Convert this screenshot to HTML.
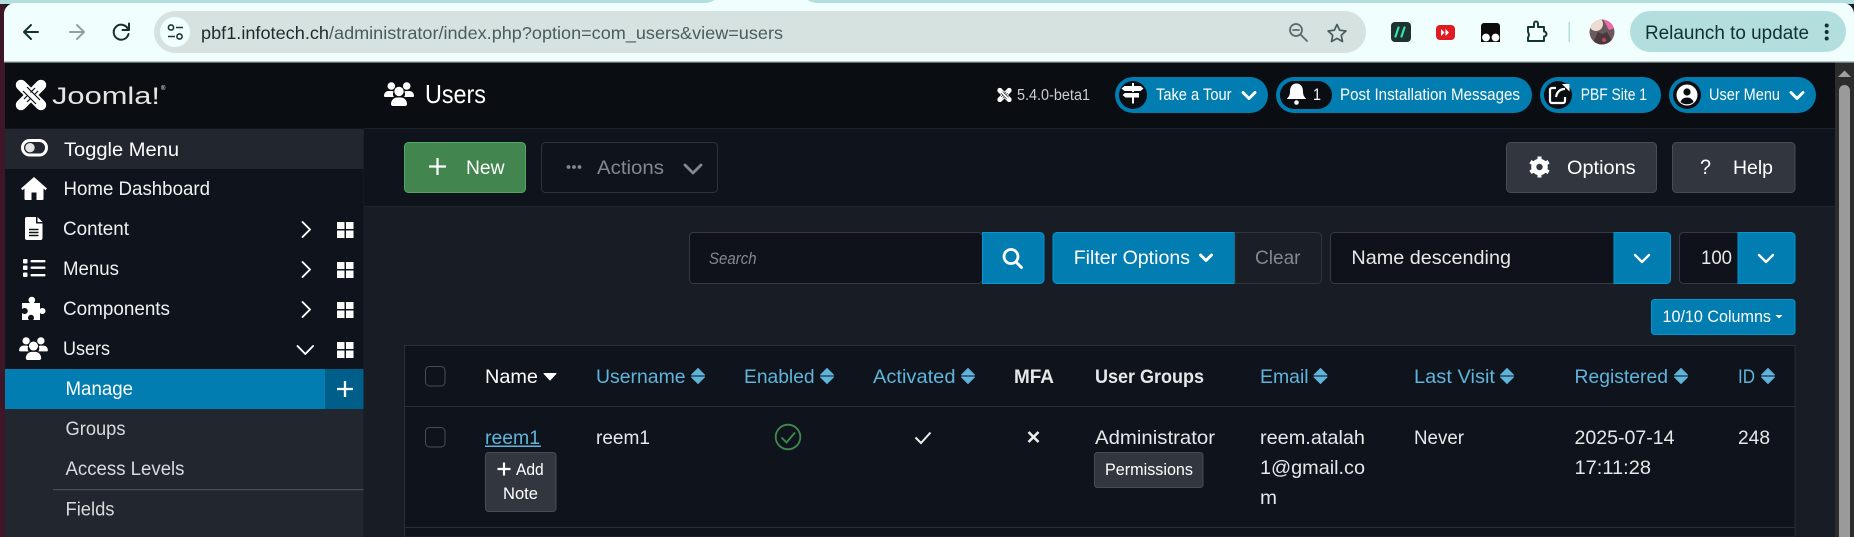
<!DOCTYPE html>
<html lang="en">
<head>
<meta charset="utf-8">
<title>Users - Joomla</title>
<style>
html,body{margin:0;padding:0;width:1854px;height:537px;overflow:hidden;background:#181c24}
svg{display:block;position:absolute;left:0;top:0}
text{font-family:"Liberation Sans",sans-serif;font-size:19.5px;fill:#e6e7e9;white-space:pre}
.s{font-size:16.5px}
.b{font-weight:700}
.l{fill:#5fb4dc}
.g{fill:#85888d}
.w{fill:#fff}
.side{fill:#eef0f2}
.c{stroke:#fff;stroke-width:1.9;fill:none;stroke-linecap:round;stroke-linejoin:round}
.c2{stroke:#fff;stroke-width:2.9;fill:none;stroke-linecap:round;stroke-linejoin:round}
</style>
</head>
<body>
<svg width="1854" height="537" viewBox="0 0 1854 537" xmlns="http://www.w3.org/2000/svg">
<defs>
  <symbol id="users" viewBox="0 0 30 24" overflow="visible">
    <circle cx="7.3" cy="4" r="3.8" fill="#fff"/><circle cx="22.7" cy="4" r="3.8" fill="#fff"/><circle cx="15" cy="9.4" r="4.7" fill="#fff"/>
    <path fill="#fff" d="M0 14c0-3 2-5 4.500-5h3c.8 0 1.600.3 2.200.7-1.100 1.300-1 3.800.3 5.300H1a1 1 0 0 1-1-1z"/>
    <path fill="#fff" d="M30 14c0-3-2-5-4.500-5h-3c-.8 0-1.600.3-2.200.7 1.100 1.300 1 3.800-.3 5.300H29a1 1 0 0 0 1-1z"/>
    <path fill="#fff" d="M7 22c0-3.800 3-6.500 6-6.500h4c3 0 6 2.700 6 6.500 0 1.200-.8 2-2 2H9c-1.200 0-2-.8-2-2z"/>
  </symbol>
  <symbol id="grid" viewBox="0 0 17 16" overflow="visible">
    <rect width="7.500" height="7" fill="#fff"/><rect x="9" width="7.500" height="7" fill="#fff"/><rect y="8.500" width="7.500" height="7.500" fill="#fff"/><rect x="9" y="8.500" width="7.500" height="7.500" fill="#fff"/>
  </symbol>
  <symbol id="sort" viewBox="0 0 14 16" overflow="visible">
    <path fill="#5fb4dc" d="M7 0.500 13.500 7H.5z M.5 9h13L7 15.500z" stroke="#5fb4dc" stroke-width="1" stroke-linejoin="round"/>
  </symbol>
  <symbol id="mini" viewBox="0 0 30 30" overflow="visible">
    <g stroke="#fff" fill="none" stroke-linecap="round">
      <path d="M5 5 25 25" stroke-width="10.500"/><path d="M25 5 5 25" stroke-width="10.500"/>
    </g>
    <circle cx="5" cy="5" r="5" fill="#fff"/><circle cx="25" cy="5" r="5" fill="#fff"/><circle cx="5" cy="25" r="5" fill="#fff"/><circle cx="25" cy="25" r="5" fill="#fff"/>
    <path d="M7 11 15 19 20 24M11 7 19 15 24 20M19 8 14.500 12.500M8 19 11 16M22 11 18.500 14.500M11 22 15 18" stroke="#0a0d12" stroke-width="1.200" fill="none"/>
  </symbol>
  <clipPath id="av"><circle cx="1602" cy="32" r="12.500"/></clipPath>
</defs>

<!-- window background -->
<rect x="0" y="0" width="1854" height="537" fill="#181c24"/>
<rect x="0" y="0" width="5" height="537" fill="#3d1628"/>
<rect x="0" y="0" width="1854" height="4" fill="#b2dfdd"/>
<path d="M4 62V14a11 11 0 0 1 11-11H1843a11 11 0 0 1 11 11V62z" fill="#f0fefe"/>
<path d="M705 3c6 0 8-3 10-3h92c2 0 4 3 10 3z" fill="#f0fefe"/>
<rect x="4" y="61" width="1850" height="1.500" fill="#b9c9c8"/>

<!-- browser chrome -->
<g fill="none" stroke="#16302f" stroke-width="2" stroke-linecap="round" stroke-linejoin="round">
  <path d="M38 32H25M31 25l-7 7 7 7"/>
  <path d="M84 32H70M77 25l7 7-7 7" stroke="#8fa3a2"/>
  <path d="M128 29a7.500 7.500 0 1 0 .5 5M129 23.500V30h-6.500"/>
</g>
<rect x="154" y="11" width="1212" height="42" rx="21" fill="#d5e2df"/>
<circle cx="175" cy="32" r="15" fill="#f0fefe"/>
<g fill="none" stroke="#1d3534" stroke-width="1.600"><circle cx="171" cy="27.500" r="2.600"/><circle cx="179.500" cy="36.500" r="2.600"/><path d="M176 27.500h7M168 36.500h7"/></g>
<text x="201" y="39" style="font-size:17.500px;fill:#1d2b2b" textLength="128" lengthAdjust="spacingAndGlyphs">pbf1.infotech.ch</text>
<text x="329" y="39" style="font-size:17.500px;fill:#4a5c5c" textLength="454" lengthAdjust="spacingAndGlyphs">/administrator/index.php?option=com_users&amp;view=users</text>
<g fill="none" stroke="#5a6a6a" stroke-width="1.800" stroke-linecap="round"><circle cx="1296" cy="30" r="6"/><path d="M1293 30h6M1301 35l6 6"/></g>
<path d="M1337 24.500l2.700 5.700 6.200.8-4.600 4.300 1.200 6.200-5.500-3.100-5.500 3.100 1.200-6.200-4.600-4.300 6.200-.8z" fill="none" stroke="#4a5c5c" stroke-width="1.700" stroke-linejoin="round"/>
<rect x="1391" y="22" width="20" height="20" rx="4" fill="#1d3333"/>
<path d="M1398.500 27.500l-3 9M1404.500 27.500l-3 9" stroke="#3be0a8" stroke-width="2.200" stroke-linecap="round"/>
<rect x="1436" y="25" width="19" height="15" rx="4" fill="#df1c22"/>
<path d="M1441 29l3.500 3.500-3.500 3.500zM1445.500 29l3.500 3.500-3.500 3.500z" fill="#fff"/>
<path d="M1484 23h13a3 3 0 0 1 3 3v16h-19V26a3 3 0 0 1 3-3z" fill="#0b0b0b"/>
<circle cx="1486" cy="37.500" r="3.900" fill="#fff"/><circle cx="1495.500" cy="37.500" r="3.900" fill="#fff"/>
<path d="M1528 27h6v-3.500a2 2 0 0 1 4 0V27h6v4.500a2.500 2.500 0 0 1 0 5V41h-16v-3.500a5 5 0 0 0 0-5.500z" fill="none" stroke="#143230" stroke-width="1.900" stroke-linejoin="round"/>
<rect x="1568.500" y="22" width="1.500" height="20" fill="#b2dfdd"/>
<g clip-path="url(#av)">
  <rect x="1589" y="19" width="26" height="26" fill="#6a5a5e"/>
  <circle cx="1596" cy="24" r="7" fill="#ecdcd2"/>
  <path d="M1603 19h12v9l-6 2z" fill="#ee6aa8"/>
  <path d="M1592 45l6-13 4 2 5-2 8 13z" fill="#4a383c"/>
  <circle cx="1604" cy="40" r="2" fill="#b54a5a"/>
</g>
<rect x="1630" y="11" width="216" height="41" rx="20.500" fill="#b2dfdd"/>
<text x="1645" y="39" style="font-size:19px;fill:#12302f" textLength="164" lengthAdjust="spacingAndGlyphs">Relaunch to update</text>
<circle cx="1826.700" cy="25.500" r="2" fill="#12302f"/><circle cx="1826.700" cy="32" r="2" fill="#12302f"/><circle cx="1826.700" cy="38.500" r="2" fill="#12302f"/>

<!-- header -->
<rect x="5" y="62.500" width="1830" height="66" fill="#0a0d12"/>
<rect x="364" y="128" width="1471" height="1" fill="#1c2027"/>
<use href="#mini" x="16" y="80" width="30" height="30"/>
<text x="52" y="104" style="font-size:24px;fill:#e4e4e4" textLength="108" lengthAdjust="spacingAndGlyphs">Joomla!</text>
<text x="161" y="90" class="w" style="font-size:6px">®</text>
<use href="#users" x="384" y="82" width="30" height="24"/>
<text x="425" y="103" class="w" style="font-size:26px" textLength="61" lengthAdjust="spacingAndGlyphs">Users</text>

<use href="#mini" x="997.500" y="88" width="14" height="14"/>
<text x="1017" y="100" style="font-size:15.500px;fill:#ccced1" textLength="73" lengthAdjust="spacingAndGlyphs">5.4.0-beta1</text>

<!-- pills -->
<rect x="1115" y="77" width="153" height="36" rx="18" fill="#017db1"/>
<circle cx="1133" cy="95" r="14" fill="#0a0d12"/>
<path d="M1132 83h2v3h6.500l3 2.500-3 2.500H1134v1.500h5v5h-5v6h-2v-6h-6.500l-3-2.500 3-2.500h6.500V91h-7.500l-3-2.500 3-2.500h7.500z" fill="#fff"/>
<path d="M1122 92.500h22" stroke="#0a0d12" stroke-width="1"/>
<text x="1156" y="100" class="s w" textLength="75.500" lengthAdjust="spacingAndGlyphs">Take a Tour</text>
<path d="M1243 92.500l6 6 6-6" class="c2"/>

<rect x="1276" y="77" width="256" height="36" rx="18" fill="#017db1"/>
<rect x="1280" y="81" width="52" height="28" rx="14" fill="#0a0d12"/>
<path d="M1296.500 83.500c-4.800 0-6.500 4-6.500 8 0 4-1.500 5.500-3.200 7.500h19.400c-1.700-2-3.200-3.500-3.200-7.500 0-4-1.700-8-6.500-8z" fill="#fff"/>
<circle cx="1296.500" cy="102.500" r="2.300" fill="#fff"/>
<text x="1313" y="100" class="s w" textLength="8" lengthAdjust="spacingAndGlyphs">1</text>
<text x="1340" y="100" class="s w" textLength="180" lengthAdjust="spacingAndGlyphs">Post Installation Messages</text>

<rect x="1540" y="77" width="121" height="36" rx="18" fill="#017db1"/>
<circle cx="1558" cy="95" r="14" fill="#0a0d12"/>
<path d="M1556 88h-4a2 2 0 0 0-2 2v11a2 2 0 0 0 2 2h11a2 2 0 0 0 2-2v-4M1556 97c1-5 4-8 9-8" fill="none" stroke="#fff" stroke-width="2.200"/>
<path d="M1562 84h7.500v7.500z" fill="#fff"/>
<text x="1580.700" y="100" class="s w" textLength="66.300" lengthAdjust="spacingAndGlyphs">PBF Site 1</text>

<rect x="1669" y="77" width="147" height="36" rx="18" fill="#017db1"/>
<circle cx="1687" cy="95" r="14" fill="#0a0d12"/>
<circle cx="1687" cy="95" r="10.500" fill="#fff"/>
<circle cx="1687" cy="92" r="3.600" fill="#0a0d12"/>
<path d="M1680.500 102c1-3 3.500-4.500 6.500-4.500s5.500 1.500 6.500 4.500c-3.500 3-9.500 3-13 0z" fill="#0a0d12"/>
<text x="1709" y="100" class="s w" textLength="71" lengthAdjust="spacingAndGlyphs">User Menu</text>
<path d="M1791 92.500l6 6 6-6" class="c2"/>

<!-- sidebar -->
<rect x="5" y="129" width="358.500" height="408" fill="#0f141c"/>
<rect x="5" y="129" width="358.500" height="40" fill="#22262e"/>
<rect x="5" y="409" width="358.500" height="128" fill="#22262e"/>
<rect x="5" y="369" width="320" height="40" fill="#017db1"/>
<rect x="325" y="369" width="38.500" height="40" fill="#005f8a"/>
<rect x="53" y="489" width="310.500" height="1.200" fill="#4a4e56"/>

<rect x="22.500" y="140.500" width="24" height="14.500" rx="7.200" fill="none" stroke="#fff" stroke-width="3"/>
<circle cx="30" cy="147.700" r="4.700" fill="#e4e4e4"/>
<text x="64" y="156" class="w" textLength="115" lengthAdjust="spacingAndGlyphs">Toggle Menu</text>

<path d="M34 177l13 11.500-1.500 1.700-2-1.700V199a1 1 0 0 1-1 1h-6v-7.500h-5V200h-6a1 1 0 0 1-1-1v-10.500l-2 1.700-1.500-1.700z" fill="#fff"/>
<text x="63.500" y="195" class="side" textLength="146.500" lengthAdjust="spacingAndGlyphs">Home Dashboard</text>

<path d="M27 217h9v6.500h6.500V238a2 2 0 0 1-2 2H27a2 2 0 0 1-2-2v-19a2 2 0 0 1 2-2z" fill="#fff"/>
<path d="M37.500 217l5 5h-5z" fill="#fff"/>
<path d="M29 229.500h9.500M29 232.500h9.500M29 235.500h9.500" stroke="#0f141c" stroke-width="1.400"/>
<text x="63" y="235" class="side" textLength="66" lengthAdjust="spacingAndGlyphs">Content</text>
<path d="M302.500 222l7.500 7.500-7.500 7.500" class="c"/>
<use href="#grid" x="337" y="222" width="17" height="16"/>

<g fill="#fff"><rect x="23" y="259" width="4.500" height="4.500" rx="1"/><rect x="23" y="265.500" width="4.500" height="4.500" rx="1"/><rect x="23" y="272.500" width="4.500" height="4.500" rx="1"/><rect x="30.500" y="260" width="15" height="2.400" rx="1"/><rect x="30.500" y="266.500" width="15" height="2.400" rx="1"/><rect x="30.500" y="274" width="15" height="2.400" rx="1"/></g>
<text x="63" y="275" class="side" textLength="56" lengthAdjust="spacingAndGlyphs">Menus</text>
<path d="M302.500 262l7.500 7.500-7.500 7.500" class="c"/>
<use href="#grid" x="337" y="262" width="17" height="16"/>

<path d="M22 303h8c-1-1-1.500-2-1.500-3a3.300 3.300 0 0 1 6.600 0c0 1-.5 2-1.300 3H40v6c1-.8 1.700-1 2.500-1a3 3 0 0 1 0 6c-.8 0-1.500-.3-2.500-1v7h-7c.8-.8 1-1.500 1-2.300a3 3 0 0 0-6 0c0 .8.200 1.500 1 2.300h-7v-7c1 .7 2 1 2.800 1a3 3 0 0 0 0-6c-.8 0-1.800.3-2.800 1z" fill="#fff"/>
<text x="63" y="315" class="side" textLength="107" lengthAdjust="spacingAndGlyphs">Components</text>
<path d="M302.500 302l7.500 7.500-7.500 7.500" class="c"/>
<use href="#grid" x="337" y="302" width="17" height="16"/>

<use href="#users" x="19" y="337" width="29" height="23"/>
<text x="63" y="355" class="side" textLength="47" lengthAdjust="spacingAndGlyphs">Users</text>
<path d="M297.500 346l7.800 8 7.800-8" class="c"/>
<use href="#grid" x="337" y="342" width="17" height="16"/>

<text x="65.500" y="395" class="w" textLength="67.500" lengthAdjust="spacingAndGlyphs">Manage</text>
<path d="M345 381v16M337 389h16" stroke="#fff" stroke-width="2.300"/>
<text x="65.500" y="435" style="fill:#d8dade" textLength="60" lengthAdjust="spacingAndGlyphs">Groups</text>
<text x="65.500" y="475" style="fill:#d8dade" textLength="119" lengthAdjust="spacingAndGlyphs">Access Levels</text>
<text x="65.500" y="515.500" style="fill:#d8dade" textLength="49" lengthAdjust="spacingAndGlyphs">Fields</text>

<!-- toolbar -->
<rect x="364" y="129" width="1471" height="77" fill="#0f141c"/>
<rect x="364" y="206" width="1471" height="1" fill="#20242c"/>

<rect x="404.500" y="142.500" width="121" height="50" rx="4" fill="#42854f" stroke="#53a863"/>
<path d="M437.500 158v17M429 166.500h17" stroke="#fff" stroke-width="2.200"/>
<text x="466" y="174" class="w" textLength="38.600" lengthAdjust="spacingAndGlyphs">New</text>

<rect x="541.500" y="142.500" width="176" height="50" rx="4" fill="#0f141c" stroke="#2e3239"/>
<g fill="#85888d"><circle cx="568.500" cy="167" r="1.900"/><circle cx="574" cy="167" r="1.900"/><circle cx="579.500" cy="167" r="1.900"/></g>
<text x="597" y="174" class="g" textLength="67" lengthAdjust="spacingAndGlyphs">Actions</text>
<path d="M685 165l8 8 8-8" fill="none" stroke="#85888d" stroke-width="2.800" stroke-linecap="round" stroke-linejoin="round"/>

<rect x="1506.500" y="142.500" width="150" height="50" rx="4" fill="#32363f" stroke="#484c54"/>
<circle cx="1539.500" cy="167" r="8.300" fill="#fff"/>
<path d="M1539.500 156.500v3.500M1539.500 174v3.500M1530.400 161.800l3 1.700M1545.600 170.500l3 1.700M1530.400 172.200l3-1.700M1545.600 163.500l3-1.700" stroke="#fff" stroke-width="4"/>
<circle cx="1539.500" cy="167" r="3.200" fill="#32363f"/>
<text x="1567" y="174" class="w" textLength="68.600" lengthAdjust="spacingAndGlyphs">Options</text>
<rect x="1672.500" y="142.500" width="122.500" height="50" rx="4" fill="#32363f" stroke="#484c54"/>
<text x="1700" y="174" class="w" style="font-size:21px" textLength="11" lengthAdjust="spacingAndGlyphs">?</text>
<text x="1733" y="174" class="w" textLength="40" lengthAdjust="spacingAndGlyphs">Help</text>

<!-- filter bar -->
<rect x="689.500" y="232.500" width="293" height="51" rx="4" fill="#0f121a" stroke="#363a42"/>
<text x="709" y="264" class="g" style="font-size:16.500px;font-style:italic" textLength="47.600" lengthAdjust="spacingAndGlyphs">Search</text>
<path d="M982.500 232.500H1040a4 4 0 0 1 4 4v43a4 4 0 0 1-4 4h-57.500z" fill="#017db1" stroke="#0098d4"/>
<circle cx="1011" cy="256.500" r="7" fill="none" stroke="#fff" stroke-width="2.800"/>
<path d="M1016 262l5.500 5.500" stroke="#fff" stroke-width="3" stroke-linecap="round"/>

<path d="M1234.500 232.500H1057a4 4 0 0 0-4 4v43a4 4 0 0 0 4 4h177.500z" fill="#017db1" stroke="#0098d4"/>
<text x="1073.700" y="264" class="w" textLength="116.300" lengthAdjust="spacingAndGlyphs">Filter Options</text>
<path d="M1200.500 255l5.500 5.500 5.500-5.500" class="c2"/>
<path d="M1235 232.500h82.500a4 4 0 0 1 4 4v43a4 4 0 0 1-4 4H1235z" fill="#1a1e26" stroke="#30343b"/>
<text x="1255" y="264" class="g" textLength="45.500" lengthAdjust="spacingAndGlyphs">Clear</text>

<rect x="1330.500" y="232.500" width="340" height="51" rx="4" fill="#0f121a" stroke="#363a42"/>
<text x="1351.400" y="264" textLength="159.600" lengthAdjust="spacingAndGlyphs">Name descending</text>
<path d="M1614 232.500h52.500a4 4 0 0 1 4 4v43a4 4 0 0 1-4 4H1614z" fill="#017db1" stroke="#0098d4"/>
<path d="M1635 255l7 7 7-7" class="c" style="stroke-width:2.300"/>

<rect x="1679.500" y="232.500" width="115.500" height="51" rx="4" fill="#0f121a" stroke="#363a42"/>
<text x="1701" y="264" textLength="31" lengthAdjust="spacingAndGlyphs">100</text>
<path d="M1738 232.500h53a4 4 0 0 1 4 4v43a4 4 0 0 1-4 4h-53z" fill="#017db1" stroke="#0098d4"/>
<path d="M1759 255l7 7 7-7" class="c" style="stroke-width:2.300"/>

<rect x="1651.500" y="299.500" width="143.500" height="35" rx="3" fill="#017db1" stroke="#0098d4"/>
<text x="1662.500" y="322" class="s w" textLength="108.500" lengthAdjust="spacingAndGlyphs">10/10 Columns</text>
<path d="M1775.500 315h7l-3.500 3.500z" fill="#fff"/>

<!-- table -->
<rect x="404.500" y="345.500" width="1390.500" height="191.500" fill="#0f141c" stroke="#2a2e36"/>
<rect x="405" y="406" width="1390" height="1" fill="#2a2e36"/>
<rect x="405" y="527" width="1390" height="1" fill="#2a2e36"/>

<rect x="425.500" y="366.500" width="19.500" height="19.500" rx="4" fill="#0f141c" stroke="#484c54"/>
<rect x="425.500" y="427.500" width="19.500" height="19.500" rx="4" fill="#0f141c" stroke="#484c54"/>

<text x="485" y="383" class="w" textLength="53" lengthAdjust="spacingAndGlyphs">Name</text>
<path d="M544 373.500h12l-6 6.500z" fill="#fff" stroke="#fff" stroke-linejoin="round"/>
<text x="596" y="383" class="l" textLength="89.600" lengthAdjust="spacingAndGlyphs">Username</text>
<use href="#sort" x="691" y="368" width="14" height="16"/>
<text x="744" y="383" class="l" textLength="70.600" lengthAdjust="spacingAndGlyphs">Enabled</text>
<use href="#sort" x="820" y="368" width="14" height="16"/>
<text x="873" y="383" class="l" textLength="82.500" lengthAdjust="spacingAndGlyphs">Activated</text>
<use href="#sort" x="961" y="368" width="14" height="16"/>
<text x="1014" y="383" class="b" textLength="40" lengthAdjust="spacingAndGlyphs">MFA</text>
<text x="1095" y="383" class="b" textLength="109" lengthAdjust="spacingAndGlyphs">User Groups</text>
<text x="1260" y="383" class="l" textLength="48.600" lengthAdjust="spacingAndGlyphs">Email</text>
<use href="#sort" x="1313.500" y="368" width="14" height="16"/>
<text x="1414" y="383" class="l" textLength="81" lengthAdjust="spacingAndGlyphs">Last Visit</text>
<use href="#sort" x="1500" y="368" width="14" height="16"/>
<text x="1574.500" y="383" class="l" textLength="93.500" lengthAdjust="spacingAndGlyphs">Registered</text>
<use href="#sort" x="1674" y="368" width="14" height="16"/>
<text x="1738" y="383" class="l" textLength="17" lengthAdjust="spacingAndGlyphs">ID</text>
<use href="#sort" x="1761" y="368" width="14" height="16"/>

<text x="485" y="444" class="l" textLength="55" lengthAdjust="spacingAndGlyphs">reem1</text>
<rect x="485" y="445.500" width="56" height="1.500" fill="#5fb4dc"/>
<rect x="485.500" y="452.500" width="70.500" height="59" rx="3" fill="#32363f" stroke="#484c54"/>
<path d="M504 462.500v13M497.500 469h13" stroke="#fff" stroke-width="2.200"/>
<text x="516" y="475" class="s w" textLength="27.700" lengthAdjust="spacingAndGlyphs">Add</text>
<text x="503" y="499" class="s w" textLength="35" lengthAdjust="spacingAndGlyphs">Note</text>

<text x="596" y="444" textLength="54" lengthAdjust="spacingAndGlyphs">reem1</text>
<circle cx="788" cy="437" r="12.300" fill="none" stroke="#3f8a4e" stroke-width="1.800"/>
<path d="M781.500 437.500l5 5 8.500-10" fill="none" stroke="#3f8a4e" stroke-width="1.800"/>
<path d="M915.500 437.500l5.500 5.500 9.500-10.500" fill="none" stroke="#eceded" stroke-width="2"/>
<path d="M1028.500 432l10 10M1038.500 432l-10 10" stroke="#eceded" stroke-width="2.600"/>

<text x="1095" y="444" textLength="120" lengthAdjust="spacingAndGlyphs">Administrator</text>
<rect x="1094.500" y="452.500" width="108.500" height="35" rx="3" fill="#32363f" stroke="#484c54"/>
<text x="1105" y="475" class="s w" textLength="88" lengthAdjust="spacingAndGlyphs">Permissions</text>

<text x="1260" y="444" textLength="105" lengthAdjust="spacingAndGlyphs">reem.atalah</text>
<text x="1260" y="474" textLength="105" lengthAdjust="spacingAndGlyphs">1@gmail.co</text>
<text x="1260" y="504" textLength="17" lengthAdjust="spacingAndGlyphs">m</text>
<text x="1414" y="444" textLength="50" lengthAdjust="spacingAndGlyphs">Never</text>
<text x="1574.500" y="444" textLength="100" lengthAdjust="spacingAndGlyphs">2025-07-14</text>
<text x="1574.500" y="474" textLength="76.500" lengthAdjust="spacingAndGlyphs">17:11:28</text>
<text x="1738" y="444" textLength="32" lengthAdjust="spacingAndGlyphs">248</text>

<!-- scrollbar -->
<rect x="1835" y="62.500" width="19" height="475" fill="#2c2c2c"/>
<path d="M1844.500 70.500l6.500 6.500h-13z" fill="#a0a0a0"/>
<path d="M1839 537V90.500a5.500 5.500 0 0 1 11 0V537z" fill="#9a9a9a"/>
</svg>
</body>
</html>
